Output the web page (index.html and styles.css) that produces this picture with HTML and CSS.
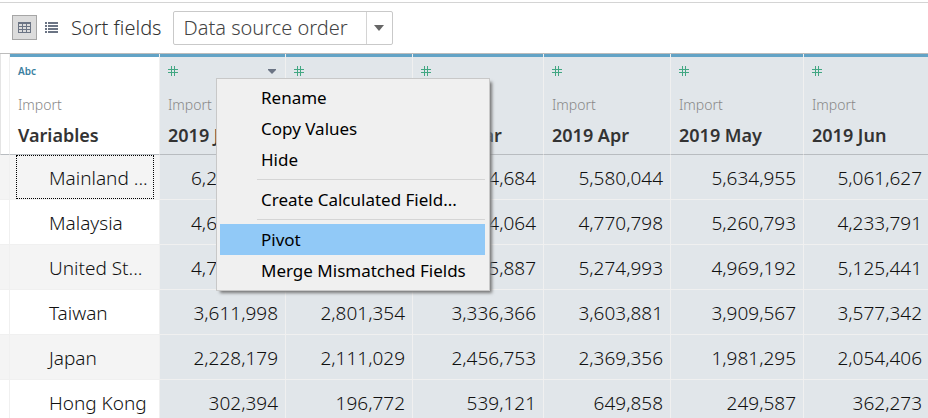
FILE: index.html
```
<!DOCTYPE html>
<html lang="en">
<head>
<meta charset="utf-8">
<title>Data source</title>
<meta name="viewport" content="width=device-width, initial-scale=1">
<link rel="stylesheet" href="styles.css">
</head>
<body>
<svg class="defs" aria-hidden="true">
  <symbol id="number" viewBox="0 0 10 10"><path d="M3.5 0v10M6.5 0v10M0 3.5h10M0 6.5h10" fill="none" stroke="#42a783" shape-rendering="crispEdges"/></symbol>
</svg>
<header class="toolbar">
  <button class="view view-on" type="button" aria-label="Preview data">
    <svg width="13" height="11" viewBox="0 0 13 11" shape-rendering="crispEdges"><path d="M.5 .5h12v10H.5zM0 1.5h13M0 4.5h13M0 7.5h13M4.5 2v9M8.5 2v9" fill="none" stroke="#6b7484"/></svg>
  </button>
  <button class="view" type="button" aria-label="Manage metadata">
    <svg width="13" height="11" viewBox="0 0 13 11" shape-rendering="crispEdges"><path d="M0 0h2v2H0zM3 0h10v2H3zM0 3h2v2H0zM3 3h10v2H3zM0 6h2v2H0zM3 6h10v2H3zM0 9h2v2H0zM3 9h10v2H3z" fill="#6b7484"/></svg>
  </button>
  <label class="sort-label" for="sort">Sort fields</label>
  <div class="picker">
    <select id="sort"><option>Data source order</option></select>
    <svg class="picker-arrow" width="10" height="6" viewBox="0 0 10 6"><path d="M0 0h10L5 6z" fill="#666"/></svg>
  </div>
</header>
<main class="grid">
  <table>
    <colgroup><col class="c-gutter"><col class="c-name"><col class="c-jan"><col class="c-feb"><col class="c-mar"><col class="c-apr"><col class="c-may"><col></colgroup>
    <thead>
      <tr>
        <td class="gutter"></td>
        <th scope="col"><div class="type abc">Abc</div><div class="source">Import</div><div class="field">Variables</div></th>
        <th scope="col" class="picked menu-host">
          <div class="type"><svg width="10" height="10"><use href="#number"/></svg>
            <button class="more" type="button" aria-label="Field menu"><svg width="8" height="5" viewBox="0 0 8 5"><path d="M0 0h8v1L4 5 0 1z" fill="#6b7484"/></svg></button></div>
          <div class="source">Import</div><div class="field">2019 Jan</div>
          <div class="menu" role="menu">
            <button type="button" role="menuitem">Rename</button>
            <button type="button" role="menuitem">Copy Values</button>
            <button type="button" role="menuitem">Hide</button>
            <hr>
            <button type="button" role="menuitem">Create Calculated Field...</button>
            <hr>
            <button type="button" role="menuitem" class="active">Pivot</button>
            <button type="button" role="menuitem">Merge Mismatched Fields</button>
          </div>
        </th>
        <th scope="col" class="picked"><div class="type"><svg width="10" height="10"><use href="#number"/></svg></div></th>
        <th scope="col" class="picked"><div class="type"><svg width="10" height="10"><use href="#number"/></svg></div><div class="source"></div><div class="field">2019 Mar</div></th>
        <th scope="col" class="picked"><div class="type"><svg width="10" height="10"><use href="#number"/></svg></div><div class="source">Import</div><div class="field">2019 Apr</div></th>
        <th scope="col" class="picked"><div class="type"><svg width="10" height="10"><use href="#number"/></svg></div><div class="source">Import</div><div class="field">2019 May</div></th>
        <th scope="col" class="picked"><div class="type"><svg width="10" height="10"><use href="#number"/></svg></div><div class="source">Import</div><div class="field">2019 Jun</div></th>
      </tr>
    </thead>
    <tbody>
      <tr><td class="gutter"></td><td class="name"><div class="focus">Mainland ...</div></td><td class="partial">6,2</td><td></td><td>4,684</td><td>5,580,044</td><td>5,634,955</td><td>5,061,627</td></tr>
      <tr><td class="gutter"></td><td class="name"><div>Malaysia</div></td><td class="partial">4,6</td><td></td><td>4,064</td><td>4,770,798</td><td>5,260,793</td><td>4,233,791</td></tr>
      <tr><td class="gutter"></td><td class="name"><div>United St...</div></td><td class="partial">4,7</td><td></td><td>5,887</td><td>5,274,993</td><td>4,969,192</td><td>5,125,441</td></tr>
      <tr><td class="gutter"></td><td class="name"><div>Taiwan</div></td><td>3,611,998</td><td>2,801,354</td><td>3,336,366</td><td>3,603,881</td><td>3,909,567</td><td>3,577,342</td></tr>
      <tr><td class="gutter"></td><td class="name"><div>Japan</div></td><td>2,228,179</td><td>2,111,029</td><td>2,456,753</td><td>2,369,356</td><td>1,981,295</td><td>2,054,406</td></tr>
      <tr><td class="gutter"></td><td class="name"><div>Hong Kong</div></td><td>302,394</td><td>196,772</td><td>539,121</td><td>649,858</td><td>249,587</td><td>362,273</td></tr>
    </tbody>
  </table>
</main>
</body>
</html>
```
FILE: styles.css
```
* { box-sizing: border-box; }
html { height: 100%; overflow: hidden; }
body {
  margin: 0;
  padding-top: 2px;
  height: 100%;
  overflow: hidden;
  background: #fff;
  color: #111;
  font-family: "Noto Sans", "Open Sans", sans-serif;
  font-size: 19px;
  font-weight: 300;
}
.defs { position: absolute; width: 0; height: 0; }
button, select { font: inherit; color: inherit; }
svg { display: block; }

.toolbar {
  display: flex;
  align-items: center;
  height: 51px;
  padding: 0 12px 1px;
  border-top: 1px solid #d4d4d4;
  font-size: 20px;
}
.view {
  display: grid;
  place-items: center;
  width: 25px;
  height: 25px;
  padding: 0;
  border: 1px solid transparent;
  background: none;
  margin-right: 2px;
}
.view-on { background: #dcdcdc; border-color: #a6a6a6; }
.sort-label { margin: 0 11px 0 5px; color: #333; }
.picker {
  position: relative;
  width: 220px;
  height: 34px;
  border: 1px solid #c9c9c9;
  border-radius: 2px;
}
.picker select {
  appearance: none;
  width: 193px;
  height: 32px;
  padding: 0 0 0 10px;
  border: 0;
  border-right: 1px solid #d4d4d4;
  background: none;
  color: #444;
}
.picker-arrow { position: absolute; right: 8px; top: 13px; pointer-events: none; }

.grid { border-top: 1px solid #bcbcbc; }
table {
  width: 100%;
  min-width: 930px;
  table-layout: fixed;
  border-collapse: separate;
  border-spacing: 0;
}
.c-gutter { width: 10px; }
.c-name { width: 150px; }
.c-jan { width: 126px; }
.c-feb { width: 127px; }
.c-mar { width: 131px; }
.c-apr { width: 127px; }
.c-may { width: 133px; }

th, td { padding: 0 7px 0 8px; border-right: 1px solid #f0f0f0; background-clip: padding-box; }
thead .gutter { border-left: 1px solid #e4e4e4; }
thead th, thead td { height: 101px; border-bottom: 1px solid #b8bcc0; vertical-align: top; }
th {
  padding-top: 3px;
  text-align: left;
  font-weight: 600;
  background-image: linear-gradient(#62a3c6, #62a3c6);
  background-size: 100% 3px;
  background-repeat: no-repeat;
}
.picked { background-color: #e1e6ea; }
.type { display: flex; align-items: center; justify-content: space-between; height: 28px; }
.abc { font-size: 10px; color: #3c7f9f; }
.source { height: 40px; line-height: 40px; font-size: 14px; font-weight: 300; color: #888; }
.field { height: 20px; line-height: 20px; font-size: 18px; color: #333; }
.more { padding: 2px; border: 0; background: none; }

tbody td { height: 45px; padding-top: 2px; border-bottom: 1px solid #f0f0f0; text-align: right; background-color: #e1e6ea; white-space: nowrap; }
tbody .partial { padding-left: 31px; text-align: left; }
tbody .gutter, tbody .name { background-color: #fff; }
tbody tr:nth-child(odd) .gutter, tbody tr:nth-child(odd) .name { background-color: #f4f4f4; }
tbody .gutter, thead .gutter { padding: 0; }
tbody .name { padding: 0 5px 0 6px; text-align: left; }
.name div { height: 44px; line-height: 44px; padding-left: 32px; border: 1px solid transparent; }
.name .focus { border: 1px dotted #000; }

.menu-host { position: relative; }
.menu {
  position: absolute;
  z-index: 2;
  left: 56px;
  top: 24px;
  width: 274px;
  padding: 3px 4px 4px 3px;
  border: 1px solid #c8c8c8;
  background: #f0f0f0;
  box-shadow: 3px 3px 3px -1px #777;
  color: #000;
  font-size: 17px;
  font-weight: 400;
}
.menu button {
  display: block;
  width: 100%;
  height: 31px;
  padding: 0 0 0 41px;
  border: 0;
  background: none;
  text-align: left;
  white-space: nowrap;
}
.menu .active { background: #91c9f7; }
.menu hr { height: 1px; margin: 4px 0 4px 37px; border: 0; background: #d5d5d5; }
```
